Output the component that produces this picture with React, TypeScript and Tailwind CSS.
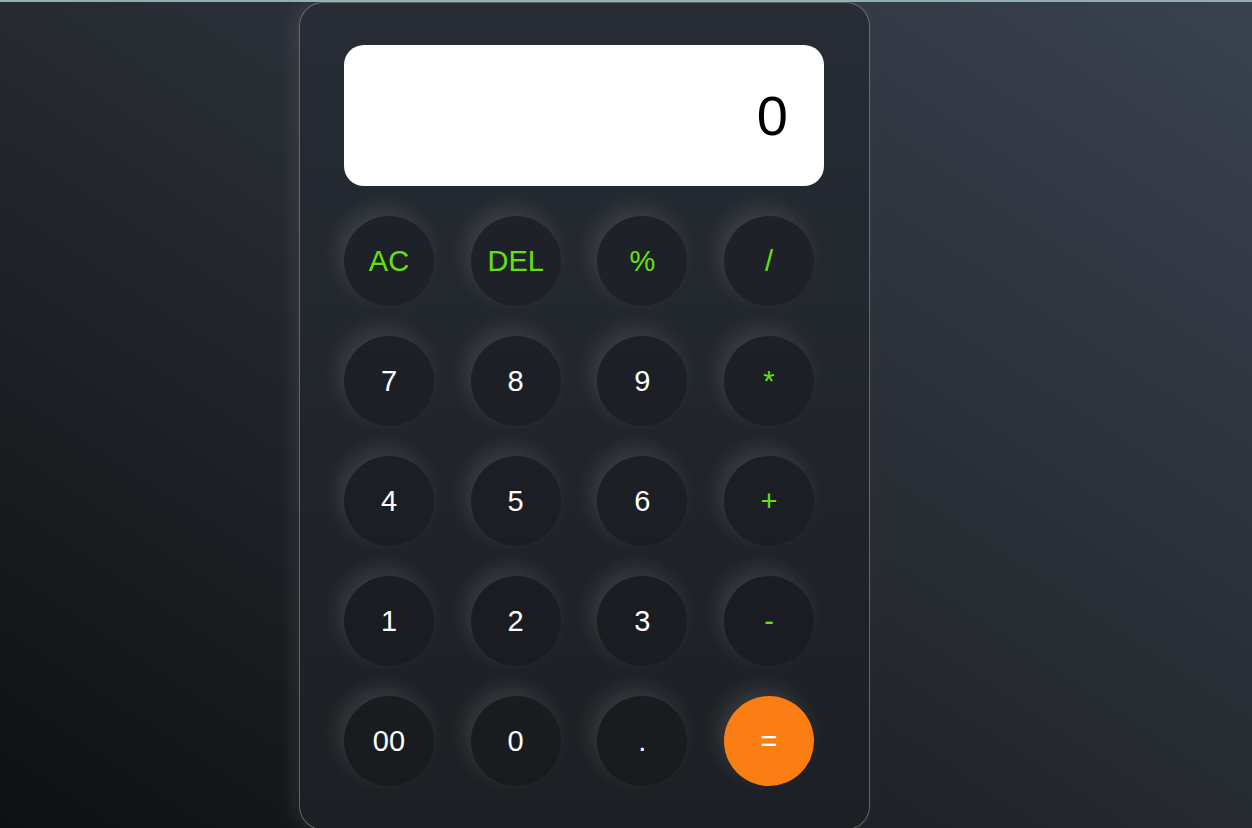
const keys = [
  { label: "AC", kind: "op" },
  { label: "DEL", kind: "op" },
  { label: "%", kind: "op" },
  { label: "/", kind: "op" },
  { label: "7", kind: "num" },
  { label: "8", kind: "num" },
  { label: "9", kind: "num" },
  { label: "*", kind: "op" },
  { label: "4", kind: "num" },
  { label: "5", kind: "num" },
  { label: "6", kind: "num" },
  { label: "+", kind: "op" },
  { label: "1", kind: "num" },
  { label: "2", kind: "num" },
  { label: "3", kind: "num" },
  { label: "-", kind: "op" },
  { label: "00", kind: "num" },
  { label: "0", kind: "num" },
  { label: ".", kind: "num" },
  { label: "=", kind: "eq" },
];

function Key({ label, kind }: { label: string; kind: string }) {
  const color =
    kind === "eq"
      ? "bg-[#fb7e15] text-white"
      : kind === "op"
      ? "bg-black/15 text-[#66e00c]"
      : "bg-black/15 text-white";
  return (
    <button
      className={`w-[90px] h-[90px] rounded-full flex items-center justify-center text-[29px] leading-none shadow-[-6px_-8px_20px_rgba(255,255,255,0.11)] ${color}`}
    >
      {label}
    </button>
  );
}

export default function App() {
  return (
    <div className="w-[1252px] h-[828px] overflow-hidden flex flex-col bg-linear-to-tr from-[#0f1012] via-[#262a31] to-[#3a4250] font-['Liberation_Sans',Arial,sans-serif]">
      <div className="h-[2px] bg-[#93adb1] shrink-0" />
      <div className="flex-1 flex items-start">
        {/* Calculator body */}
        <div className="ml-[299px] w-[571px] h-[828px] shrink-0 rounded-[24px] border border-white/30 bg-linear-to-b from-[#272c35] to-[#1c1f23] px-[44px] pt-[42px] pb-[42px] shadow-[-6px_0_18px_rgba(255,255,255,0.08)]">
          {/* Display */}
          <div className="h-[141px] w-[480px] rounded-[20px] bg-white flex items-center justify-end pr-[36px]">
            <span className="text-[56px] leading-none text-black">0</span>
          </div>

          {/* Keys */}
          <div className="mt-[30px] w-[470px] grid grid-cols-4 gap-x-[36.67px] gap-y-[30px]">
            {keys.map((k) => (
              <Key key={k.label} label={k.label} kind={k.kind} />
            ))}
          </div>
        </div>
      </div>
    </div>
  );
}
